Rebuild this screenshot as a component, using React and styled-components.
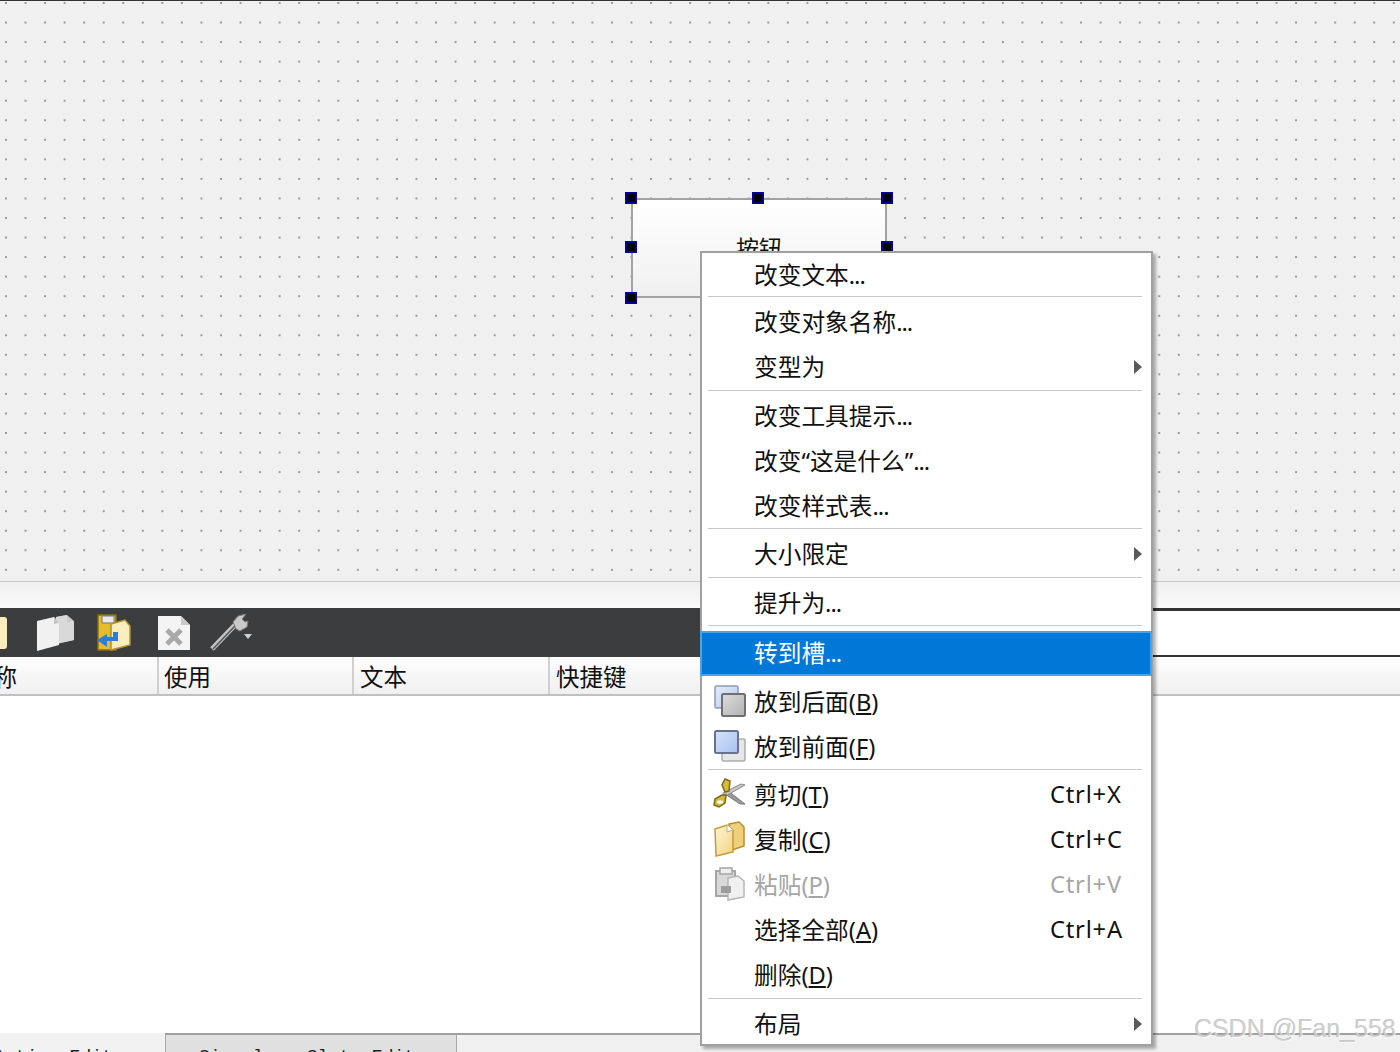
import React from 'react';
import styled, { createGlobalStyle } from 'styled-components';

const FONT = '"Noto Sans", "Noto Sans CJK SC", sans-serif';

const GlobalStyle = createGlobalStyle`
  html, body {
    margin: 0;
    padding: 0;
    width: 1400px;
    height: 1052px;
    overflow: hidden;
    background: #f0f0f0;
  }
`;

const menuItems = [
  { label: '改变文本', dots: true, short: true },
  { sep: true },
  { label: '改变对象名称', dots: true },
  { label: '变型为', arrow: true },
  { sep: true },
  { label: '改变工具提示', dots: true },
  { label: '改变“这是什么”', dots: true },
  { label: '改变样式表', dots: true },
  { sep: true },
  { label: '大小限定', arrow: true },
  { sep: true },
  { label: '提升为', dots: true },
  { sep: true, wide: true },
  { label: '转到槽', dots: true, active: true },
  { sep: true, hidden: true },
  { label: '放到后面', mnemonic: 'B', icon: 'back' },
  { label: '放到前面', mnemonic: 'F', icon: 'front' },
  { sep: true },
  { label: '剪切', mnemonic: 'T', icon: 'cut', shortcut: 'Ctrl+X' },
  { label: '复制', mnemonic: 'C', icon: 'copy', shortcut: 'Ctrl+C' },
  { label: '粘贴', mnemonic: 'P', icon: 'paste', shortcut: 'Ctrl+V', disabled: true },
  { label: '选择全部', mnemonic: 'A', shortcut: 'Ctrl+A' },
  { label: '删除', mnemonic: 'D' },
  { sep: true },
  { label: '布局', arrow: true },
];

const handles = [
  [-6, -6], [121, -6], [250, -6],
  [-6, 43], [250, 43],
  [-6, 94], [121, 94], [250, 94],
];

const BackIcon = () => (
  <svg width="34" height="34" viewBox="0 0 34 34">
    <defs>
      <linearGradient id="backBlue" x1="0" y1="0" x2="1" y2="1">
        <stop offset="0" stopColor="#e4ecfb" />
        <stop offset="1" stopColor="#b3c8ef" />
      </linearGradient>
      <linearGradient id="backGrey" x1="0" y1="0" x2="1" y2="1">
        <stop offset="0" stopColor="#dcdcdc" />
        <stop offset="1" stopColor="#b2b2b2" />
      </linearGradient>
    </defs>
    <rect x="2" y="2" width="23" height="22" rx="1.5" fill="url(#backBlue)" stroke="#8d9ab5" strokeWidth="1.5" />
    <rect x="9" y="10" width="23" height="22" rx="1.5" fill="url(#backGrey)" stroke="#6f6f6f" strokeWidth="2" />
  </svg>
);

const FrontIcon = () => (
  <svg width="34" height="34" viewBox="0 0 34 34">
    <defs>
      <linearGradient id="frontBlue" x1="0" y1="0" x2="1" y2="1">
        <stop offset="0" stopColor="#d5e2fa" />
        <stop offset="1" stopColor="#a9c1f0" />
      </linearGradient>
    </defs>
    <rect x="9" y="10" width="23" height="22" rx="1.5" fill="#e6e6e6" stroke="#adadad" strokeWidth="1.5" />
    <rect x="2" y="2" width="23" height="22" rx="1.5" fill="url(#frontBlue)" stroke="#66738f" strokeWidth="2" />
  </svg>
);

const CutIcon = () => (
  <svg width="34" height="34" viewBox="0 0 34 34">
    <path d="M14 13 L32 27 L27 27 L12 17 Z" fill="#9a9a9a" stroke="#7a7a7a" strokeWidth="1" />
    <path d="M11 20 L32 8 L28 7 L10 16 Z" fill="#c6c6c6" stroke="#8a8a8a" strokeWidth="1" />
    <path d="M12 2 L17 4 L16 14 L12 15 L9 8 Z" fill="#d4bb3a" stroke="#7c6a1a" strokeWidth="1.5" />
    <path d="M13 18 L9 18 L2 22 L1 28 L6 30 L12 26 Z" fill="#d4bb3a" stroke="#7c6a1a" strokeWidth="1.5" />
    <ellipse cx="7" cy="25" rx="3" ry="1.8" fill="#fff" />
  </svg>
);

const CopyIcon = () => (
  <svg width="34" height="36" viewBox="0 0 34 36">
    <defs>
      <linearGradient id="copyYellow" x1="0" y1="0" x2="1" y2="1">
        <stop offset="0" stopColor="#fff6d6" />
        <stop offset="1" stopColor="#f2d27f" />
      </linearGradient>
    </defs>
    <path d="M16 3 L26 1 L31 6 L31 25 L16 30 Z" fill="#f0cf7c" stroke="#b98e2c" strokeWidth="1.5" />
    <path d="M2 8 L14 4 L20 9 L20 31 L3 35 Z" fill="url(#copyYellow)" stroke="#c49a3a" strokeWidth="1.5" />
    <path d="M14 4 L14 11 L20 9" fill="#fff" stroke="#c9b277" strokeWidth="1" />
  </svg>
);

const PasteIcon = () => (
  <svg width="34" height="36" viewBox="0 0 34 36">
    <path d="M3 5 H22 V30 H3 Z" fill="#d8d8d8" stroke="#a5a5a5" strokeWidth="2" />
    <rect x="7" y="2" width="12" height="6" fill="#eeeeee" stroke="#a5a5a5" strokeWidth="1.5" />
    <path d="M15 12 L25 10 L31 15 L31 31 L15 34 Z" fill="#f0f0f0" stroke="#b5b5b5" strokeWidth="1.5" />
    <path d="M8 20 H18 V27 H8 Z" fill="#9d9d9d" />
  </svg>
);

const menuIcons = {
  back: <BackIcon />,
  front: <FrontIcon />,
  cut: <CutIcon />,
  copy: <CopyIcon />,
  paste: <PasteIcon />,
};

const DocIcons = () => (
  <svg width="40" height="38" viewBox="0 0 40 38">
    <path d="M20 3 L31 1 L38 7 L38 26 L20 30 Z" fill="#c9c9c9" />
    <path d="M20 3 L31 1 L31 8 L38 7 L38 26 L20 30 Z" fill="#d9d9d9" />
    <path d="M1 7 L18 3 L23 9 L23 31 L1 37 Z" fill="#f1f1f1" />
    <path d="M18 3 L18 10 L23 9 Z" fill="#c4c4c4" />
  </svg>
);

const MoveIcon = () => (
  <svg width="36" height="38" viewBox="0 0 36 38">
    <path d="M2 1 H20 V36 H2 Z" fill="#e3bd2f" stroke="#8a6d12" strokeWidth="1.5" />
    <rect x="6" y="2" width="12" height="7" fill="#e9e9e9" stroke="#777" strokeWidth="1" />
    <path d="M15 10 L29 6 L34 12 L34 31 L15 36 Z" fill="#fbeebd" stroke="#b58f33" strokeWidth="1.5" />
    <path d="M12 18 H22 V27 H11 V33 L1 26 L11 20 L11 23 H17 V18 Z" fill="#2a7de0" />
  </svg>
);

const DeleteDocIcon = () => (
  <svg width="38" height="38" viewBox="-5 0 38 38">
    <path d="M1 2 H24 L33 11 V36 H1 Z" fill="#f4f4f4" />
    <path d="M24 2 L24 11 L33 11 Z" fill="#c9c9c9" />
    <path d="M10 16 L24 30 M24 16 L10 30" stroke="#a9a9a9" strokeWidth="5" />
  </svg>
);

const WrenchIcon = () => (
  <svg width="44" height="40" viewBox="0 0 44 40">
    <path d="M2 36 L25 12" stroke="#c2c2c2" strokeWidth="5" />
    <path d="M3 36 L25 13" stroke="#555" strokeWidth="1.5" />
    <path d="M23 9 L28 3 L36 1 L32 6 L35 9 L38 8 L37 14 L30 18 L26 16 Z" fill="#c9c9c9" stroke="#7a7a7a" strokeWidth="1" />
    <path d="M34 21 H42 L38 26 Z" fill="#d0d0d0" />
  </svg>
);

export default function App() {
  return (
    <Page>
      <GlobalStyle />
      <Canvas>
        <FormButton>
          <ButtonLabel>按钮</ButtonLabel>
          {handles.map(([x, y]) => (
            <Handle key={`${x}-${y}`} style={{ left: x, top: y }} />
          ))}
        </FormButton>
      </Canvas>
      <Strip />
      <ToolRow>
        <Toolbar>
          <PartialDoc />
          <DocIcons />
          <MoveIcon />
          <DeleteDocIcon />
          <WrenchIcon />
        </Toolbar>
        <ToolBlank />
      </ToolRow>
      <HeaderRow>
        <HeaderCell $width={159} $indent={-30}>名称</HeaderCell>
        <HeaderCell $width={195} $indent={5}>使用</HeaderCell>
        <HeaderCell $width={196} $indent={6}>文本</HeaderCell>
        <HeaderCell $width={300} $indent={6}>快捷键</HeaderCell>
      </HeaderRow>
      <ListArea />
      <TabBar>
        <Tab $width={165} $active $indent={-6}>Action Editor</Tab>
        <Tab $width={292} $indent={33}>Signals _ Slots Editor</Tab>
      </TabBar>

      <Menu>
        {menuItems.map((item, i) =>
          item.sep ? (
            <MenuSeparator key={i} $hidden={item.hidden} $wide={item.wide} />
          ) : (
            <MenuRow
              key={i}
              $active={item.active}
              $disabled={item.disabled}
              $short={item.short}
            >
              <MenuIconSlot>{item.icon && menuIcons[item.icon]}</MenuIconSlot>
              <MenuLabel>
                {item.label}
                {item.dots && <Dots>...</Dots>}
                {item.mnemonic && (
                  <>
                    (<u>{item.mnemonic}</u>)
                  </>
                )}
              </MenuLabel>
              {item.shortcut && <Shortcut>{item.shortcut}</Shortcut>}
              {item.arrow && <Arrow />}
            </MenuRow>
          )
        )}
      </Menu>
      <Watermark>CSDN @Fan_558</Watermark>
    </Page>
  );
}

const Page = styled.div`
  position: relative;
  display: flex;
  flex-direction: column;
  width: 1400px;
  height: 1052px;
  overflow: hidden;
  font-family: ${FONT};
  color: #111;
`;

const Canvas = styled.div`
  position: relative;
  flex: none;
  height: 581px;
  box-sizing: border-box;
  border-top: 1px solid #333;
  background-color: #f0f0f0;
  background-image: radial-gradient(circle at 1px 1px, #999 0, #999 1px, transparent 1.4px);
  background-size: 19.55px 19.55px;
  background-position: 5px 1px;
`;

const FormButton = styled.div`
  position: absolute;
  left: 631px;
  top: 197px;
  width: 256px;
  height: 100px;
  box-sizing: border-box;
  border: 2px solid #a3a3a3;
  background: linear-gradient(to bottom, #ffffff, #f0f0f0);
  display: flex;
  align-items: center;
  justify-content: center;
`;

const ButtonLabel = styled.span`
  font-size: 23px;
  line-height: 1;
`;

const Handle = styled.div`
  position: absolute;
  width: 12px;
  height: 12px;
  box-sizing: border-box;
  margin: -2px;
  border: 2px solid #00009a;
  background: #000;
`;

const Strip = styled.div`
  flex: none;
  height: 26px;
  border-top: 1px solid #c8c8c8;
  background: linear-gradient(to bottom, #f0f0f0, #fafafa);
`;

const ToolRow = styled.div`
  flex: none;
  display: flex;
  height: 49px;
`;

const Toolbar = styled.div`
  flex: none;
  width: 720px;
  display: flex;
  align-items: center;
  gap: 20px;
  padding-left: 36px;
  box-sizing: border-box;
  background: #3c3d3f;
  position: relative;
`;

const PartialDoc = styled.div`
  position: absolute;
  left: 0;
  top: 9px;
  width: 7px;
  height: 32px;
  background: #fbeebd;
  border-radius: 0 3px 3px 0;
`;

const ToolBlank = styled.div`
  flex: 1;
  background: #fff;
  border-top: 3px solid #333;
  border-bottom: 2px solid #333;
`;

const HeaderRow = styled.div`
  flex: none;
  display: flex;
  height: 37px;
  overflow: hidden;
  border-bottom: 2px solid #c0c0c0;
  background: linear-gradient(to bottom, #fefefe, #f0f0f0);
`;

const HeaderCell = styled.div`
  flex: none;
  width: ${props => props.$width}px;
  box-sizing: border-box;
  padding-left: ${props => Math.max(props.$indent, 0)}px;
  text-indent: ${props => Math.min(props.$indent, 0)}px;
  font-size: 23.5px;
  line-height: 40px;
  white-space: nowrap;
  border-right: 2px solid #d0d0d0;
`;

const ListArea = styled.div`
  flex: 1;
  background: #fff;
`;

const TabBar = styled.div`
  flex: none;
  display: flex;
  height: 17px;
  border-top: 2px solid #a0a0a0;
  background: #f0f0f0;
`;

const Tab = styled.div`
  flex: none;
  width: ${props => props.$width}px;
  box-sizing: border-box;
  overflow: hidden;
  margin-top: ${props => (props.$active ? '-2px' : 0)};
  background: ${props => (props.$active ? '#f2f2f2' : '#e0e0e0')};
  border-left: ${props => (props.$active ? 'none' : '1px solid #a8a8a8')};
  border-right: ${props => (props.$active ? 'none' : '1px solid #a8a8a8')};
  text-indent: ${props => props.$indent}px;
  font-family: "Liberation Mono", monospace;
  font-size: 18px;
  line-height: 1;
  padding-top: ${props => (props.$active ? '15px' : '13px')};
  white-space: nowrap;
  color: #222;
`;

const Menu = styled.div`
  position: absolute;
  left: 700px;
  top: 251px;
  width: 453px;
  height: 795px;
  box-sizing: border-box;
  border: 2px solid #a0a0a0;
  background: #fff;
  box-shadow: 3px 3px 3px rgba(0, 0, 0, 0.3);
  display: flex;
  flex-direction: column;
`;

const MenuRow = styled.div`
  flex: none;
  display: flex;
  align-items: center;
  height: ${props => (props.$short ? '43px' : '45px')};
  box-sizing: border-box;
  font-size: 23.7px;
  white-space: nowrap;
  color: ${props => (props.$disabled ? '#a6a6a6' : props.$active ? '#fff' : '#111')};
  background: ${props => (props.$active ? '#0078d7' : 'transparent')};
  border: ${props => (props.$active ? '2px solid #4aa3e8' : 'none')};
  margin: ${props => (props.$active ? '0 -1px 0 -2px' : '0')};
  padding: ${props => (props.$active ? '0 8px 2px 2px' : '0 10px 2px 2px')};
`;

const MenuIconSlot = styled.span`
  flex: none;
  width: 50px;
  height: 36px;
  padding-left: 9px;
  box-sizing: border-box;
  display: flex;
  align-items: center;
`;

const MenuLabel = styled.span`
  flex: 1;
`;

const Dots = styled.span`
  letter-spacing: -1px;
`;

const Shortcut = styled.span`
  flex: none;
  width: 91px;
  letter-spacing: 0.8px;
`;

const Arrow = styled.span`
  flex: none;
  width: 0;
  height: 0;
  margin: 2px -1px 0 0;
  border-top: 7px solid transparent;
  border-bottom: 7px solid transparent;
  border-left: 8px solid #5a5a5a;
`;

const MenuSeparator = styled.div`
  flex: none;
  height: ${props => (props.$wide ? '5.5px' : '3.5px')};
  margin: 0 9px 0 6px;
  box-sizing: border-box;
  border-top: 1.5px solid ${props => (props.$hidden ? 'transparent' : '#c8c8c8')};
`;

const Watermark = styled.div`
  position: absolute;
  right: 4px;
  bottom: 9px;
  font-family: "Liberation Sans", sans-serif;
  font-size: 25px;
  color: rgba(200, 200, 200, 0.75);
  text-shadow: 1px 1px 0 rgba(255, 255, 255, 0.6), -0.5px -0.5px 0 rgba(130, 130, 130, 0.4);
  white-space: nowrap;
`;
